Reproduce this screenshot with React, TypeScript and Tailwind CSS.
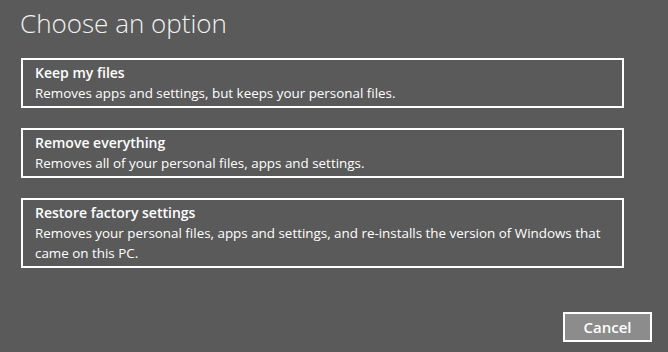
import React from "react";

const options: { title: string; lines: string[] }[] = [
  { title: "Keep my files", lines: ["Removes apps and settings, but keeps your personal files."] },
  { title: "Remove everything", lines: ["Removes all of your personal files, apps and settings."] },
  {
    title: "Restore factory settings",
    lines: [
      "Removes your personal files, apps and settings, and re-installs the version of Windows that",
      "came on this PC.",
    ],
  },
];

export default function App() {
  return (
    <div
      className="w-[668px] h-[352px] bg-[#5a5a5a] text-white flex flex-col overflow-hidden"
      style={{ fontFamily: '"Open Sans", "Noto Sans", sans-serif' }}
    >
      <h1 className="ml-[20px] mt-[6px] text-[26px] font-light leading-[34px] text-[#f2f2f2]">Choose an option</h1>
      <div className="ml-[21px] mt-[18px] w-[603px] flex flex-col gap-[20px]">
        {options.map((o) => (
          <div key={o.title} className="border-2 border-white px-[12px] py-[3px]">
            <div className="text-[14px] font-semibold leading-[20px]">{o.title}</div>
            {o.lines.map((l) => (
              <div key={l} className="text-[13.4px] leading-[20px] whitespace-nowrap">
                {l}
              </div>
            ))}
          </div>
        ))}
      </div>
      <div className="flex justify-end mr-[16px] mt-[44px]">
        <button className="w-[89px] h-[30px] border-2 border-white bg-[#8c8c8c] text-white text-[15px] font-semibold leading-none">
          Cancel
        </button>
      </div>
    </div>
  );
}
